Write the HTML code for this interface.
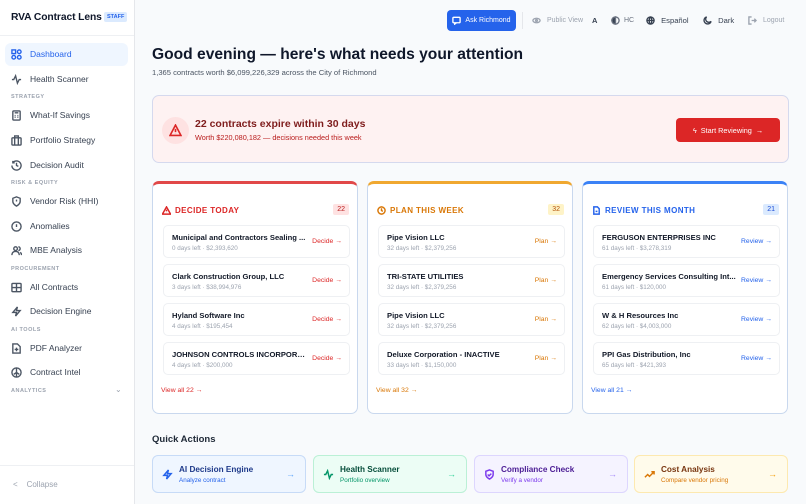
<!DOCTYPE html>
<html><head><meta charset="utf-8"><style>
*{box-sizing:border-box;margin:0;padding:0}
body{width:806px;height:504px;overflow:hidden;background:#f8fafc;font-family:"Liberation Sans",sans-serif;color:#0f172a;position:relative}
.sb{position:absolute;left:0;top:0;width:135px;height:504px;background:#fff;border-right:1px solid #e5e7eb}
.logo{position:absolute;left:11px;top:12px;font-size:10.3px;font-weight:bold;letter-spacing:-.1px}
.staff{position:absolute;left:104px;top:12px;background:#dbeafe;color:#2563eb;font-size:5.5px;font-weight:bold;padding:2px 3px;border-radius:2px}
.hl{position:absolute;left:0;top:35px;width:134px;border-top:1px solid #eef0f3}
.it{position:absolute;left:11px;font-size:8.5px;color:#374151;display:flex;align-items:center;gap:8px;height:14px}
.it svg{width:11px;height:11px;stroke:#4b5563;fill:none;stroke-width:1.5}
.sec{position:absolute;left:11px;font-size:5.5px;font-weight:bold;color:#9ca3af;letter-spacing:.5px}
.act{position:absolute;left:5px;top:43px;width:123px;height:23px;background:#eff6ff;border-radius:6px}
.top{position:absolute;top:10px;height:21px;display:flex;align-items:center;font-size:7.5px;color:#6b7280;gap:4px;white-space:nowrap}
.top svg{width:9px;height:9px;fill:none;stroke:currentColor;stroke-width:1.5}
h1{position:absolute;left:152px;top:46px;font-size:15.6px;font-weight:bold}
.sub{position:absolute;left:152px;top:68px;font-size:7.6px;color:#4b5563}
.alert{position:absolute;left:152px;top:95px;width:637px;height:68px;background:#fef2f2;border:1px solid #d5d9ee;border-radius:7px}
.card{position:absolute;top:181px;width:206px;height:233px;background:#fff;border:1px solid #c9d8ee;border-top:3px solid;border-radius:7px}
.ch{position:absolute;left:9px;top:22px;font-size:8px;font-weight:bold;letter-spacing:.4px;display:flex;align-items:center;gap:4px}
.ch svg{width:9px;height:9px;fill:none;stroke:currentColor;stroke-width:1.6}
.bd{position:absolute;right:8px;top:20px;font-size:7px;padding:2px 4px;border-radius:2px}
.row{position:absolute;left:10px;width:187px;height:33px;border:1px solid #eef0f3;border-radius:5px;background:#fff}
.rn{position:absolute;left:8px;top:7px;font-size:7.6px;font-weight:bold;color:#111827;white-space:nowrap;width:136px;overflow:hidden;text-overflow:ellipsis}
.rs{position:absolute;left:8px;top:19px;font-size:6.3px;color:#9ca3af}
.ra{position:absolute;right:7px;top:12px;font-size:6.8px}
.va{position:absolute;left:8px;top:203px;font-size:6.8px}
.qa{position:absolute;top:455px;height:38px;width:154px;border:1px solid;border-radius:6px}
.qt{position:absolute;left:26px;top:9px;font-size:8.2px;font-weight:bold}
.qs{position:absolute;left:26px;top:21px;font-size:6.3px}
.qi{position:absolute;left:9px;top:13px;width:11px;height:11px;fill:none;stroke:currentColor;stroke-width:1.6}
.qr{position:absolute;right:10px;top:13px;font-size:9px}
</style></head><body>
<div class="sb">
<div class="logo">RVA Contract Lens</div><div class="staff">STAFF</div>
<div class="hl"></div>
<div class="act"></div>
<div class="it" style="top:47px;color:#2563eb"><svg viewBox="0 0 12 12" style="stroke:#2563eb"><rect x="1" y="1" width="4" height="4"/><rect x="7" y="1" width="4" height="4" rx="2"/><rect x="1" y="7" width="4" height="4" rx="2"/><rect x="7" y="7" width="4" height="4" rx="2"/></svg>Dashboard</div>
<div class="it" style="top:72px"><svg viewBox="0 0 12 12"><path d="M1 6h2l2-4 2 8 2-4h2"/></svg>Health Scanner</div>
<div class="sec" style="top:94px">STRATEGY</div>
<div class="it" style="top:108px"><svg viewBox="0 0 12 12"><rect x="2" y="1" width="8" height="10" rx="1"/><path d="M4 3h4M4 6h1M7 6h1M4 8h1M7 8h1"/></svg>What-If Savings</div>
<div class="it" style="top:133px"><svg viewBox="0 0 12 12"><rect x="1" y="3" width="10" height="8" rx="1"/><path d="M4 3V1h4v2M4 3v8M8 3v8"/></svg>Portfolio Strategy</div>
<div class="it" style="top:158px"><svg viewBox="0 0 12 12"><path d="M2 3a5 5 0 1 1-1 3M2 1v2h2M6 3v3l2 1"/></svg>Decision Audit</div>
<div class="sec" style="top:180px">RISK &amp; EQUITY</div>
<div class="it" style="top:194px"><svg viewBox="0 0 12 12"><path d="M6 1l4 1.5v3.5c0 3-4 5-4 5s-4-2-4-5V2.5z M6 4v2M6 8v.1"/></svg>Vendor Risk (HHI)</div>
<div class="it" style="top:219px"><svg viewBox="0 0 12 12"><circle cx="6" cy="6" r="5"/><path d="M6 3.5v3M6 8.5v.1"/></svg>Anomalies</div>
<div class="it" style="top:243px"><svg viewBox="0 0 12 12"><circle cx="5" cy="4" r="2"/><path d="M1 11c0-3 2-4 4-4s4 1 4 4M8 2a2 2 0 0 1 0 4M10 8c1 .5 1.5 2 1.5 3"/></svg>MBE Analysis</div>
<div class="sec" style="top:266px">PROCUREMENT</div>
<div class="it" style="top:280px"><svg viewBox="0 0 12 12"><rect x="1" y="1.5" width="10" height="9" rx="1"/><path d="M1 6h10M6 1.5v9"/></svg>All Contracts</div>
<div class="it" style="top:304px"><svg viewBox="0 0 12 12"><path d="M7 1L2 7h4l-1 4 5-6H6z"/></svg>Decision Engine</div>
<div class="sec" style="top:327px">AI TOOLS</div>
<div class="it" style="top:341px"><svg viewBox="0 0 12 12"><path d="M2 1h5l3 3v7H2z M6 5v4M4 7h4"/></svg>PDF Analyzer</div>
<div class="it" style="top:365px"><svg viewBox="0 0 12 12"><circle cx="6" cy="6" r="5"/><path d="M6 1v10M3 8l3-2 3 2"/></svg>Contract Intel</div>
<div class="sec" style="top:388px">ANALYTICS</div>
<div style="position:absolute;left:115px;top:385px;font-size:8px;color:#9ca3af">⌄</div>
<div class="hl" style="top:465px"></div>
<div style="position:absolute;left:13px;top:480px;font-size:8px;color:#9ca3af">&lt;&nbsp;&nbsp;&nbsp;&nbsp;Collapse</div>
</div>

<div class="top" style="left:447px;width:69px;background:#2563eb;color:#fff;border-radius:4px;justify-content:center;font-size:7px"><svg viewBox="0 0 10 10"><rect x="1" y="1.5" width="8" height="6" rx="1"/><path d="M3 7.5v1.5l2-1.5"/></svg>Ask Richmond</div>
<div style="position:absolute;left:522px;top:12px;height:17px;border-left:1px solid #e5e7eb"></div>
<div class="top" style="left:532px;color:#9ca3af;font-size:7px"><svg viewBox="0 0 10 10"><ellipse cx="5" cy="5" rx="4" ry="2.5"/><circle cx="5" cy="5" r="1"/></svg>&nbsp;Public View</div>
<div class="top" style="left:592px;font-weight:bold;color:#374151">A</div>
<div class="top" style="left:611px;color:#6b7280;font-size:7px"><svg viewBox="0 0 10 10"><circle cx="5" cy="5" r="4"/><path d="M5 1a4 4 0 0 0 0 8z" fill="#374151"/></svg>HC</div>
<div class="top" style="left:646px;color:#374151;font-size:7.6px"><svg viewBox="0 0 10 10"><circle cx="5" cy="5" r="4"/><path d="M1 5h8M5 1c-2 2-2 6 0 8M5 1c2 2 2 6 0 8"/></svg>&nbsp;Español</div>
<div class="top" style="left:703px;color:#374151;font-size:7.6px"><svg viewBox="0 0 10 10"><path d="M4 1a4 4 0 1 0 5 5 3 3 0 0 1-5-5z"/></svg>&nbsp;Dark</div>
<div class="top" style="left:748px;color:#9ca3af;font-size:7px"><svg viewBox="0 0 10 10"><path d="M4 1H1v8h3M4 5h5M7 3l2 2-2 2"/></svg>&nbsp;Logout</div>

<h1>Good evening — here's what needs your attention</h1>
<div class="sub">1,365 contracts worth $6,099,226,329 across the City of Richmond</div>

<div class="alert">
<div style="position:absolute;left:9px;top:21px;width:27px;height:27px;border-radius:50%;background:#fee2e2"></div>
<svg style="position:absolute;left:16px;top:28px;width:13px;height:13px;fill:none;stroke:#dc2626;stroke-width:1.5" viewBox="0 0 12 12"><path d="M6 1L11 10.5H1z M6 4.5v3M6 9v.1"/></svg>
<div style="position:absolute;left:42px;top:22px;font-size:10.5px;font-weight:bold;color:#7f1d1d">22 contracts expire within 30 days</div>
<div style="position:absolute;left:42px;top:37px;font-size:7.3px;color:#b91c1c">Worth $220,080,182 — decisions needed this week</div>
<div style="position:absolute;left:523px;top:22px;width:104px;height:24px;background:#dc2626;border-radius:4px;color:#fff;font-size:7.3px;display:flex;align-items:center;justify-content:center">ϟ&nbsp;&nbsp;Start Reviewing&nbsp;&nbsp;→</div>
</div>

<div class="card" style="left:152px;border-top-color:#e14848">
<div class="ch" style="color:#dc2626"><svg viewBox="0 0 10 10"><path d="M5 1L9.5 9H.5z M5 4v2M5 7.5v.1"/></svg>DECIDE TODAY</div>
<div class="bd" style="background:#fee2e2;color:#b91c1c">22</div>
<div class="row" style="top:41px"><div class="rn">Municipal and Contractors Sealing ...</div><div class="rs">0 days left · $2,393,620</div><div class="ra" style="color:#dc2626">Decide →</div></div>
<div class="row" style="top:80px"><div class="rn">Clark Construction Group, LLC</div><div class="rs">3 days left · $38,994,976</div><div class="ra" style="color:#dc2626">Decide →</div></div>
<div class="row" style="top:119px"><div class="rn">Hyland Software Inc</div><div class="rs">4 days left · $195,454</div><div class="ra" style="color:#dc2626">Decide →</div></div>
<div class="row" style="top:158px"><div class="rn">JOHNSON CONTROLS INCORPORA...</div><div class="rs">4 days left · $200,000</div><div class="ra" style="color:#dc2626">Decide →</div></div>
<div class="va" style="color:#dc2626">View all 22 →</div>
</div>

<div class="card" style="left:367px;border-top-color:#f0a830">
<div class="ch" style="color:#d97706"><svg viewBox="0 0 10 10"><circle cx="5" cy="5" r="4"/><path d="M5 2.5V5l1.5 1"/></svg>PLAN THIS WEEK</div>
<div class="bd" style="background:#fef3c7;color:#b45309">32</div>
<div class="row" style="top:41px"><div class="rn">Pipe Vision LLC</div><div class="rs">32 days left · $2,379,256</div><div class="ra" style="color:#d97706">Plan →</div></div>
<div class="row" style="top:80px"><div class="rn">TRI-STATE UTILITIES</div><div class="rs">32 days left · $2,379,256</div><div class="ra" style="color:#d97706">Plan →</div></div>
<div class="row" style="top:119px"><div class="rn">Pipe Vision LLC</div><div class="rs">32 days left · $2,379,256</div><div class="ra" style="color:#d97706">Plan →</div></div>
<div class="row" style="top:158px"><div class="rn">Deluxe Corporation - INACTIVE</div><div class="rs">33 days left · $1,150,000</div><div class="ra" style="color:#d97706">Plan →</div></div>
<div class="va" style="color:#d97706">View all 32 →</div>
</div>

<div class="card" style="left:582px;border-top-color:#3b82f6">
<div class="ch" style="color:#2563eb"><svg viewBox="0 0 10 10"><path d="M2 1h4l2 2v6H2z M4 6h2"/></svg>REVIEW THIS MONTH</div>
<div class="bd" style="background:#dbeafe;color:#1d4ed8">21</div>
<div class="row" style="top:41px"><div class="rn">FERGUSON ENTERPRISES INC</div><div class="rs">61 days left · $3,278,319</div><div class="ra" style="color:#2563eb">Review →</div></div>
<div class="row" style="top:80px"><div class="rn">Emergency Services Consulting Int...</div><div class="rs">61 days left · $120,000</div><div class="ra" style="color:#2563eb">Review →</div></div>
<div class="row" style="top:119px"><div class="rn">W &amp; H Resources Inc</div><div class="rs">62 days left · $4,003,000</div><div class="ra" style="color:#2563eb">Review →</div></div>
<div class="row" style="top:158px"><div class="rn">PPI Gas Distribution, Inc</div><div class="rs">65 days left · $421,393</div><div class="ra" style="color:#2563eb">Review →</div></div>
<div class="va" style="color:#2563eb">View all 21 →</div>
</div>

<div style="position:absolute;left:152px;top:434px;font-size:9.5px;font-weight:bold;color:#1f2937">Quick Actions</div>
<div class="qa" style="left:152px;background:#eff6ff;border-color:#c7dbf7;color:#2563eb"><svg class="qi" viewBox="0 0 12 12"><path d="M7 1L2 7h4l-1 4 5-6H6z"/></svg><div class="qt" style="color:#1e3a8a">AI Decision Engine</div><div class="qs">Analyze contract</div><div class="qr" style="color:#60a5fa">→</div></div>
<div class="qa" style="left:313px;background:#ecfdf5;border-color:#bbf0d6;color:#059669"><svg class="qi" viewBox="0 0 12 12"><path d="M1 6h2l2-4 2 8 2-4h2"/></svg><div class="qt" style="color:#064e3b">Health Scanner</div><div class="qs">Portfolio overview</div><div class="qr" style="color:#34d399">→</div></div>
<div class="qa" style="left:474px;background:#f5f3ff;border-color:#ddd6fe;color:#7c3aed"><svg class="qi" viewBox="0 0 12 12"><path d="M6 1l4 1.5v3.5c0 3-4 5-4 5s-4-2-4-5V2.5z M4 6l1.5 1.5L8 5"/></svg><div class="qt" style="color:#4c1d95">Compliance Check</div><div class="qs">Verify a vendor</div><div class="qr" style="color:#a78bfa">→</div></div>
<div class="qa" style="left:634px;background:#fffbeb;border-color:#fde9b0;color:#d97706"><svg class="qi" viewBox="0 0 12 12"><path d="M1 9l3-3 2 2 5-5M8 3h3v3"/></svg><div class="qt" style="color:#78350f">Cost Analysis</div><div class="qs">Compare vendor pricing</div><div class="qr" style="color:#f59e0b">→</div></div>
</body></html>
